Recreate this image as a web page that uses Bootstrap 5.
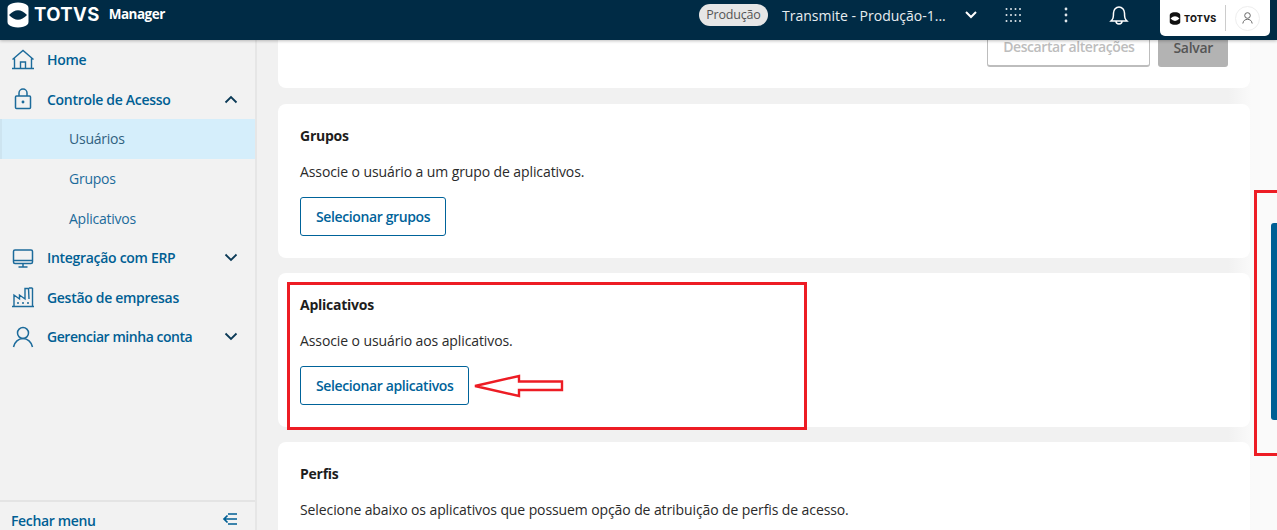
<!DOCTYPE html>
<html lang="pt-BR">
<head>
<meta charset="utf-8">
<title>TOTVS Manager</title>
<link href="https://cdn.jsdelivr.net/npm/bootstrap@5.3.0/dist/css/bootstrap.min.css" rel="stylesheet">
<style>
html,body{height:530px;overflow:hidden}
body{font-family:"Open Sans","Liberation Sans",sans-serif;font-size:14px;color:#1d1d1d;background:#f0f0f0;position:relative}
.topbar{height:40px;background:#002b45;position:relative;z-index:5;box-shadow:0 1px 3px rgba(0,0,0,.25)}
.brand-word{font:700 18.500px "Inter",sans-serif;letter-spacing:.4px;color:#fff;line-height:1;margin-left:5px}
.brand-app{font-weight:700;font-size:13.500px;color:#fff;margin-left:9px;letter-spacing:-.5px}
.env-pill{background:#e6e6e6;color:#555;border-radius:12px;height:22px;line-height:22px;padding:0 7.500px;font-size:12.500px;letter-spacing:-.2px}
.env-name{color:#e8edf0;font-size:14px;letter-spacing:0;width:182px;margin-left:14px;white-space:nowrap}
.logo-tab{position:absolute;left:1160px;top:0;width:110px;height:36px;background:#fff;border-radius:0 0 5px 5px;padding-left:9px}
.logo-tab-word{font:800 9px "Inter",sans-serif;color:#1a1a1a;letter-spacing:.2px;margin-left:3px}
.logo-sep{width:1px;height:26px;background:#ccc;margin:0 9px 0 9px}
.avatar-ring{width:25px;height:25px;border:1px solid #eee;border-radius:50%}
.shell{height:490px}
.sidemenu{width:257px;flex:none;background:#f2f2f2;border-right:2px solid #e6e6e6;height:490px}
.side-item{height:39.600px;flex:none;padding-left:11px;color:#005f94;font-weight:600;font-size:14px;letter-spacing:-.3px}
.side-item svg.lead-ico{width:24px;height:24px;margin-right:12px;flex:none}
.side-item .chev{margin-left:auto;margin-right:17px}
.side-item.is-tight{letter-spacing:-.45px}
.side-sub{height:39.600px;flex:none;padding-left:69px;color:#1c6b9b;font-size:14px;letter-spacing:-.25px}
.side-sub.is-active{background:#d5eefb;color:#30617f;border-left:2px solid #cde4f0;padding-left:67px}
.side-foot{height:30px;flex:none;border-top:2px solid #e4e4e4;padding:8px 17px 0 11px;color:#005f94;font-weight:600;letter-spacing:-.35px;overflow:visible}
.main-area{flex:1;overflow:hidden;padding:0 27px 0 21px;background:linear-gradient(90deg,#f1f1f1 0,#f1f1f1 971px,#fafafa 995px)}
.panel{background:#fff;border-radius:8px;padding:22px 22px 22px;margin-bottom:15px}
.panel-actions{height:48px;padding:0 22px;border-radius:0 0 8px 8px;overflow:visible;margin-bottom:16px}
.panel-title{font-weight:700;font-size:14px;letter-spacing:-.25px;line-height:19px;margin-bottom:17px}
.panel-text{font-size:14px;letter-spacing:-.1px;line-height:19px;margin-bottom:16px;color:#2a2a2a}
.btn-outline-app{border:1px solid #00639a;color:#00639a;background:#fff;font-weight:600;font-size:14px;letter-spacing:-.38px;height:39px;padding:0 15px 0 15px;border-radius:3px;line-height:37px}
.action-row{margin-top:-12px}
.btn-discard{height:39px;padding:0 15px;border:1px solid #bdbdbd;border-bottom-width:2px;border-radius:3px;background:#fff;color:#bdbdbd;font-weight:600;font-size:14px;letter-spacing:-.43px;line-height:14px}
.btn-save{height:39px;padding:0 15px;border:0;border-radius:3px;background:#b3b3b3;color:#555;font-weight:600;font-size:14px;letter-spacing:-.3px;line-height:14px;margin-left:8px}
.mark-box{position:absolute;border:3px solid #ed1c24;z-index:6;pointer-events:none}
.mark-a{left:287px;top:282px;width:520px;height:148px}
.mark-b{left:1254px;top:190px;width:23px;height:266px;border-right:0}
.scroll-thumb{position:absolute;left:1271px;top:223px;width:6px;height:197px;background:#005f94;border-radius:3px 0 0 3px;z-index:6}
.arrow-mark{position:absolute;left:472px;top:372px;z-index:6}
</style>
</head>
<body>
<header class="topbar d-flex align-items-center">
  <div class="d-flex align-items-center" style="margin-top:-11px;padding-left:7px">
    <svg width="22" height="26" viewBox="0 0 22 26"><path fill="#fff" d="M11 .5C15 .5 18 1.500 20 3Q21.500 4 21.500 6V20Q21.500 22 20 23C18 24.500 15 25.500 11 25.500C7 25.500 4 24.500 2 23Q.5 22 .5 20V6Q.5 4 2 3C4 1.500 7 .5 11 .5Z"/><path fill="#002b45" d="M2 13Q11 3.500 20 13Q11 22.500 2 13Z"/></svg>
    <span class="brand-word">TOTVS</span>
    <span class="brand-app">Manager</span>
  </div>
  <div class="d-flex align-items-center" style="margin-left:auto;margin-right:148px;margin-top:-10px">
    <span class="env-pill">Produção</span>
    <span class="env-name">Transmite - Produção-1...</span>
    <svg width="14" height="10" viewBox="0 0 14 10"><path d="M2 2l5 5 5-5" fill="none" stroke="#fff" stroke-width="2"/></svg>
    <svg width="16" height="16" viewBox="0 0 16 16" fill="#dfe6ea" style="margin-left:27px"><circle cx="1.500" cy="2" r="1"/><circle cx="6" cy="2" r="1"/><circle cx="10.500" cy="2" r="1"/><circle cx="15" cy="2" r="1"/><circle cx="1.500" cy="8" r="1"/><circle cx="6" cy="8" r="1"/><circle cx="10.500" cy="8" r="1"/><circle cx="15" cy="8" r="1"/><circle cx="1.500" cy="14" r="1"/><circle cx="6" cy="14" r="1"/><circle cx="10.500" cy="14" r="1"/><circle cx="15" cy="14" r="1"/></svg>
    <svg width="4" height="16" viewBox="0 0 4 16" fill="#dfe6ea" style="margin-left:43px"><circle cx="2" cy="2" r="1.400"/><circle cx="2" cy="8" r="1.400"/><circle cx="2" cy="14" r="1.400"/></svg>
    <svg width="20" height="24" viewBox="0 0 20 24" fill="none" stroke="#fff" stroke-width="1.500" style="margin-left:41px"><path d="M2 18c2-2 2.500-3 2.500-8a5.500 6 0 0 1 11 0c0 5 .5 6 2.500 8z"/><path d="M7 18c0 4 6 4 6 0"/></svg>
  </div>
  <div class="logo-tab d-flex align-items-center">
    <svg width="12" height="13" viewBox="0 0 22 26"><path fill="#111" d="M11 .5C15 .5 18 1.500 20 3Q21.500 4 21.500 6V20Q21.500 22 20 23C18 24.500 15 25.500 11 25.500C7 25.500 4 24.500 2 23Q.5 22 .5 20V6Q.5 4 2 3C4 1.500 7 .5 11 .5Z"/><path fill="#fff" d="M2 13Q11 3.500 20 13Q11 22.500 2 13Z"/></svg>
    <span class="logo-tab-word">TOTVS</span>
    <span class="logo-sep"></span>
    <span class="avatar-ring d-flex align-items-center justify-content-center">
      <svg width="11" height="12" viewBox="0 0 11 12" fill="none" stroke="#666" stroke-width="1"><circle cx="5.500" cy="3.500" r="2.800"/><path d="M.8 11.500c.5-3 2.500-4.200 4.700-4.200s4.200 1.200 4.700 4.200"/></svg>
    </span>
  </div>
</header>
<div class="shell d-flex">
  <nav class="sidemenu d-flex flex-column">
    <div class="side-item d-flex align-items-center">
      <svg class="lead-ico" viewBox="0 0 24 24" fill="none" stroke="#1c6b9b" stroke-width="1.400"><path d="M1 20.500h22M3.500 20V10.500M20.500 20V10.500M1.500 11.500 12 2.500l10.500 9M9.500 20v-6h5v6"/></svg>Home
    </div>
    <div class="side-item d-flex align-items-center">
      <svg class="lead-ico" viewBox="0 0 24 24" fill="none" stroke="#1c6b9b" stroke-width="1.500"><rect x="4.500" y="9" width="15" height="12.500" rx="1"/><path d="M8 9V6a4 4 0 0 1 8 0v3"/><circle cx="12" cy="15" r=".7" fill="#1c6b9b"/></svg>Controle de Acesso
      <svg class="chev" width="14" height="9" viewBox="0 0 14 9"><path d="M1.500 7.500 7 2l5.500 5.500" fill="none" stroke="#0b3a57" stroke-width="1.800"/></svg>
    </div>
    <div class="side-sub is-active d-flex align-items-center">Usuários</div>
    <div class="side-sub d-flex align-items-center">Grupos</div>
    <div class="side-sub d-flex align-items-center">Aplicativos</div>
    <div class="side-item d-flex align-items-center">
      <svg class="lead-ico" viewBox="0 0 24 24" fill="none" stroke="#1c6b9b" stroke-width="1.500"><rect x="2.500" y="4" width="19" height="13.500" rx="1.500"/><path d="M2.500 14.500h19M12 17.500v3M7.500 21h9"/></svg>Integração com ERP
      <svg class="chev" width="14" height="9" viewBox="0 0 14 9"><path d="M1.500 1.500 7 7l5.500-5.500" fill="none" stroke="#0b3a57" stroke-width="1.800"/></svg>
    </div>
    <div class="side-item d-flex align-items-center">
      <svg class="lead-ico" viewBox="0 0 24 24" fill="none" stroke="#1c6b9b" stroke-width="1.400"><path d="M1 21.500h22M3 21V10l5.500 4v-4l5.500 4V3.500h3.500L18 14M21.500 3V21M18 3h3.500M6 18h2M11 18h2M16 18h2"/></svg>Gestão de empresas
    </div>
    <div class="side-item is-tight d-flex align-items-center">
      <svg class="lead-ico" viewBox="0 0 24 24" fill="none" stroke="#1c6b9b" stroke-width="1.500"><circle cx="12" cy="8" r="5.500"/><path d="M2.500 22c1-5 5-8.500 9.500-8.500s8.500 3.500 9.500 8.500"/></svg>Gerenciar minha conta
      <svg class="chev" width="14" height="9" viewBox="0 0 14 9"><path d="M1.500 1.500 7 7l5.500-5.500" fill="none" stroke="#0b3a57" stroke-width="1.800"/></svg>
    </div>
    <div class="side-foot mt-auto d-flex align-items-start justify-content-between">
      <span>Fechar menu</span>
      <svg width="16" height="14" viewBox="0 0 16 14" style="margin-top:2px;flex:none" fill="none" stroke="#005f94" stroke-width="1.700"><path d="M6 2h9M2 7h13M6 12h9M5.500 3.500 2 7l3.500 3.500"/></svg>
    </div>
  </nav>
  <main class="main-area">
    <section class="panel panel-actions d-flex justify-content-end align-items-start">
      <div class="d-flex action-row">
        <span class="btn-discard d-flex align-items-center">Descartar alterações</span>
        <span class="btn-save d-flex align-items-center">Salvar</span>
      </div>
    </section>
    <section class="panel">
      <h2 class="panel-title">Grupos</h2>
      <p class="panel-text">Associe o usuário a um grupo de aplicativos.</p>
      <button class="btn btn-outline-app d-block">Selecionar grupos</button>
    </section>
    <section class="panel">
      <h2 class="panel-title">Aplicativos</h2>
      <p class="panel-text">Associe o usuário aos aplicativos.</p>
      <button class="btn btn-outline-app d-block">Selecionar aplicativos</button>
    </section>
    <section class="panel">
      <h2 class="panel-title">Perfis</h2>
      <p class="panel-text">Selecione abaixo os aplicativos que possuem opção de atribuição de perfis de acesso.</p>
    </section>
  </main>
</div>
<div class="mark-box mark-a"></div>
<div class="mark-box mark-b"></div>
<div class="scroll-thumb"></div>
<svg class="arrow-mark" width="94" height="28" viewBox="0 0 94 28"><path d="M3 14 L47 4 V9.500 H90 V18 H47 V24 Z" fill="#fff" stroke="#ed1c24" stroke-width="2.400"/></svg>
</body>
</html>
